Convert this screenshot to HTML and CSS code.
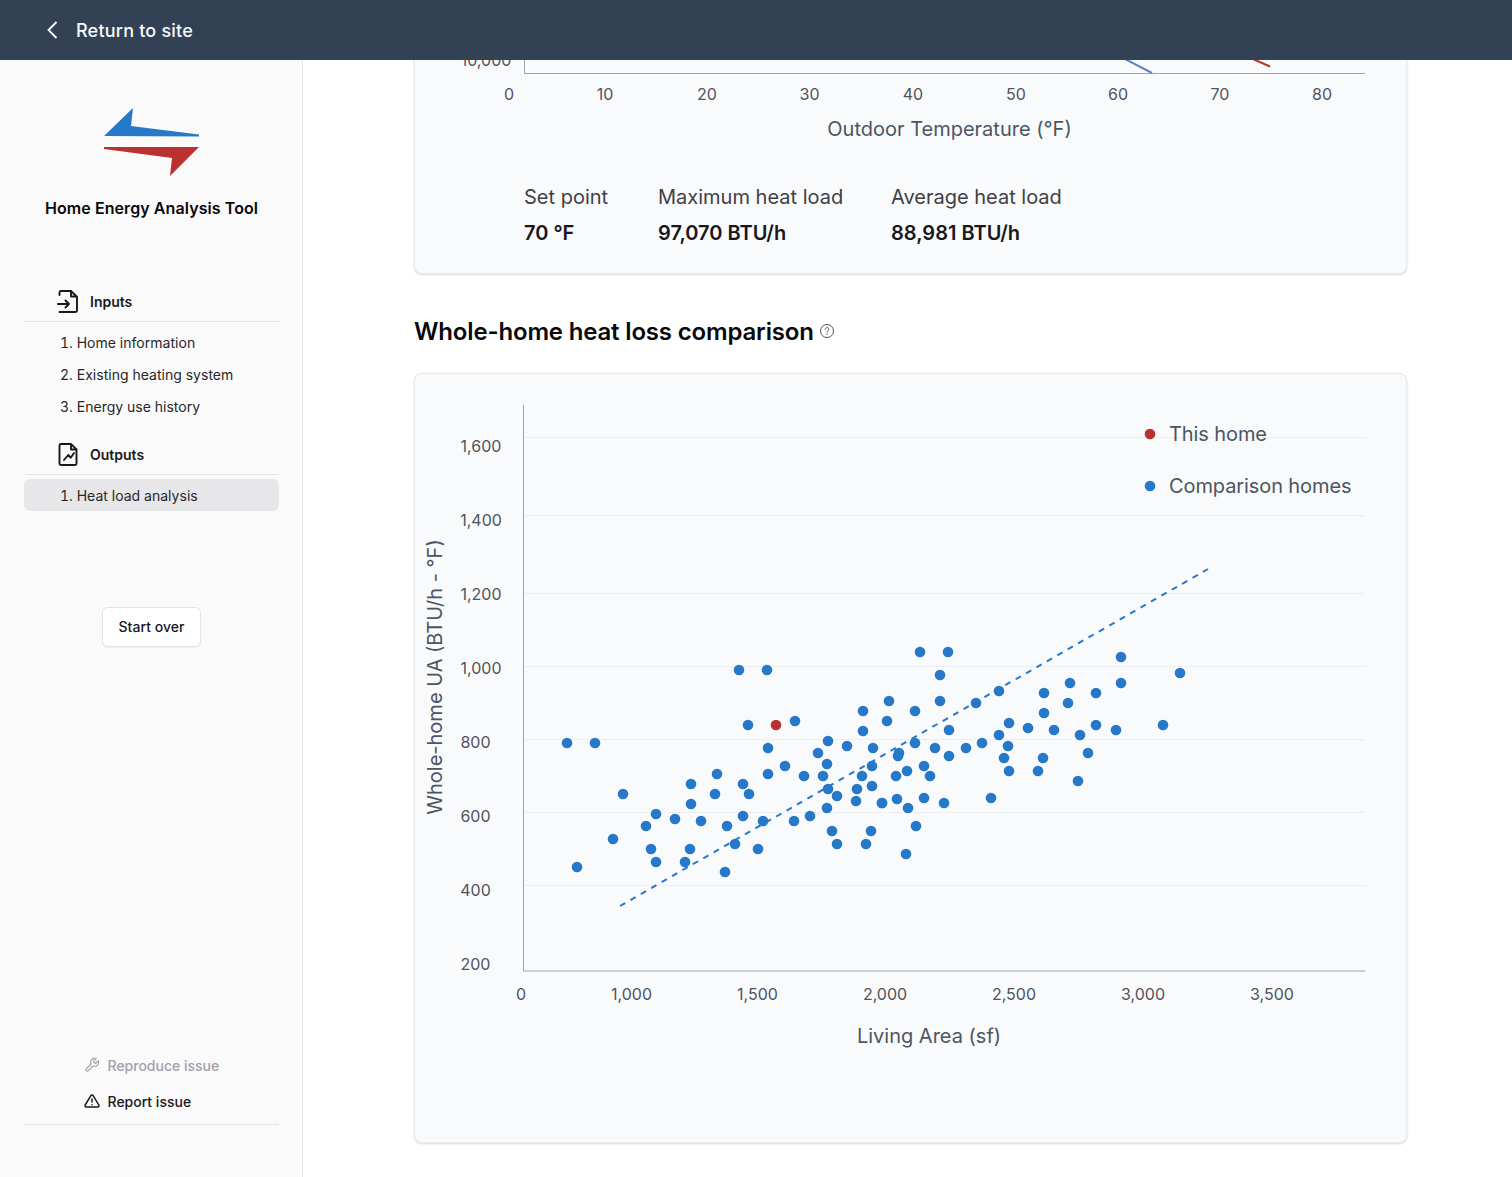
FILE: index.html
```html
<!DOCTYPE html>
<html lang="en">
<head>
<meta charset="utf-8">
<title>Home Energy Analysis Tool</title>
<link rel="stylesheet" href="styles.css">
</head>
<body>
<header class="topbar">
  <svg class="back-icon" width="12" height="20" viewBox="0 0 12 20"><path d="M10.500 2 L2.500 10 L10.500 18" fill="none" stroke="#fff" stroke-width="1.800"/></svg>
  <span class="back-label">Return to site</span>
</header>
<div class="shell">
  <aside class="sidebar">
    <div class="brand">
      <svg class="logo" width="96" height="70" viewBox="104 107 96 70">
        <path d="M104 136 L133 108 L131 126 L199 134.500 V136.500 Z" fill="#2679c9"/>
        <path d="M104 147 H199 L170 176 L172 158 L104 149 Z" fill="#b9322f"/>
      </svg>
      <div class="brand-name">Home Energy Analysis Tool</div>
    </div>
    <nav class="nav">
      <div class="nav-head">
        <svg width="22" height="24" viewBox="0 0 22 24" fill="none" stroke="#18181b" stroke-width="1.900" stroke-linecap="round" stroke-linejoin="round"><path d="M2.500 6V3.500A1.500 1.500 0 0 1 4 2H14L20 8V21.500A1.500 1.500 0 0 1 18.500 23H2.500"/><path d="M14 2.500V7.500H19.500"/><path d="M.8 15H12M8.500 11.500 12 15 8.500 18.500"/></svg>
        <span>Inputs</span>
      </div>
      <ul class="nav-list">
        <li class="nav-item">1. Home information</li>
        <li class="nav-item">2. Existing heating system</li>
        <li class="nav-item">3. Energy use history</li>
      </ul>
      <div class="nav-head nav-head-second">
        <svg width="22" height="24" viewBox="0 0 22 24" fill="none" stroke="#18181b" stroke-width="1.900" stroke-linecap="round" stroke-linejoin="round"><path d="M14 2H4A1.500 1.500 0 0 0 2.500 3.500V21.500A1.500 1.500 0 0 0 4 23H18A1.500 1.500 0 0 0 19.500 21.500V7.500Z"/><path d="M14 2.500V7.500H19"/><path d="M7 18 11.300 13 13.700 15.700 17 11"/></svg>
        <span>Outputs</span>
      </div>
      <ul class="nav-list">
        <li class="nav-item is-active">1. Heat load analysis</li>
      </ul>
    </nav>
    <button class="start-over" type="button">Start over</button>
    <div class="side-foot">
      <div class="foot-link is-disabled">
        <svg width="16" height="16" viewBox="0 0 24 24" fill="none" stroke="#a1a1aa" stroke-width="1.800" stroke-linecap="round" stroke-linejoin="round"><path d="M14.700 6.300a1 1 0 0 0 0 1.400l1.600 1.600a1 1 0 0 0 1.400 0l3.770-3.770a6 6 0 0 1-7.940 7.940l-6.910 6.910a2.120 2.120 0 0 1-3-3l6.910-6.910a6 6 0 0 1 7.940-7.940l-3.760 3.760z"/></svg>
        <span>Reproduce issue</span>
      </div>
      <div class="foot-link">
        <svg width="16" height="16" viewBox="0 0 24 24" fill="none" stroke="#18181b" stroke-width="2.200" stroke-linecap="round" stroke-linejoin="round"><path d="M10.300 3.900 1.800 18a2 2 0 0 0 1.700 3h17a2 2 0 0 0 1.700-3L13.700 3.900a2 2 0 0 0-3.400 0z"/><path d="M12 9v4.500M12 17.500h.01"/></svg>
        <span>Report issue</span>
      </div>
    </div>
  </aside>
  <main class="main">
    <section class="card card-top">
      <svg class="chart-top" viewBox="415 0 991 150" width="991" height="150">
        <text class="tick" x="486" y="65" text-anchor="middle">10,000</text>
        <path d="M524.500 40V72.500H1365" fill="none" stroke="#9ca3af"/>
        <path d="M1100 45 L1152 72" stroke="#5b84c4" stroke-width="2" fill="none"/>
        <path d="M1230 48 L1270 65.500" stroke="#b9322f" stroke-width="2" fill="none"/>
        <text class="tick" x="509" y="99" text-anchor="middle">0</text>
        <text class="tick" x="605" y="99" text-anchor="middle">10</text>
        <text class="tick" x="707" y="99" text-anchor="middle">20</text>
        <text class="tick" x="809.500" y="99" text-anchor="middle">30</text>
        <text class="tick" x="913" y="99" text-anchor="middle">40</text>
        <text class="tick" x="1016" y="99" text-anchor="middle">50</text>
        <text class="tick" x="1118" y="99" text-anchor="middle">60</text>
        <text class="tick" x="1220" y="99" text-anchor="middle">70</text>
        <text class="tick" x="1322" y="99" text-anchor="middle">80</text>
        <text class="axis-title" x="949.500" y="135" text-anchor="middle">Outdoor Temperature (°F)</text>
      </svg>
      <dl class="stats">
        <div class="stat"><dt>Set point</dt><dd>70 °F</dd></div>
        <div class="stat"><dt>Maximum heat load</dt><dd>97,070 BTU/h</dd></div>
        <div class="stat"><dt>Average heat load</dt><dd>88,981 BTU/h</dd></div>
      </dl>
    </section>
    <h2 class="section-title">
      <span>Whole-home heat loss comparison</span>
      <svg class="help-icon" width="16" height="16" viewBox="0 0 16 16" fill="none" stroke="#52525b" stroke-width="1"><circle cx="8" cy="8" r="6.500"/><path d="M6.200 6.300a1.800 1.800 0 1 1 2.800 1.500c-.6.400-1 .7-1 1.400M8 11v.6" stroke-linecap="round"/></svg>
    </h2>
    <section class="card card-chart">
      <svg class="chart-main" viewBox="415 374 991 768" width="991" height="768">
        <g class="grid">
          <path d="M524 437.500H1365M524 515.500H1365M524 593.500H1365M524 666.500H1365M524 739.500H1365M524 812.500H1365M524 885.500H1365"/>
        </g>
        <path d="M523.500 405V971H1365" fill="none" stroke="#9ca3af"/>
        <path class="trend" d="M620 906 L1208 569"/>
        <g id="points" class="points"><circle cx="739" cy="670" r="5.300"/><circle cx="767" cy="670" r="5.300"/><circle cx="748" cy="725" r="5.300"/><circle cx="795" cy="721" r="5.300"/><circle cx="567" cy="743" r="5.300"/><circle cx="595" cy="743" r="5.300"/><circle cx="768" cy="748" r="5.300"/><circle cx="828" cy="741" r="5.300"/><circle cx="847" cy="746" r="5.300"/><circle cx="818" cy="753" r="5.300"/><circle cx="827" cy="764" r="5.300"/><circle cx="873" cy="748" r="5.300"/><circle cx="863" cy="711" r="5.300"/><circle cx="863" cy="731" r="5.300"/><circle cx="785" cy="766" r="5.300"/><circle cx="768" cy="774" r="5.300"/><circle cx="717" cy="774" r="5.300"/><circle cx="823" cy="776" r="5.300"/><circle cx="804" cy="776" r="5.300"/><circle cx="691" cy="784" r="5.300"/><circle cx="743" cy="784" r="5.300"/><circle cx="623" cy="794" r="5.300"/><circle cx="715" cy="794" r="5.300"/><circle cx="749" cy="794" r="5.300"/><circle cx="828" cy="789" r="5.300"/><circle cx="837" cy="796" r="5.300"/><circle cx="857" cy="789" r="5.300"/><circle cx="872" cy="766" r="5.300"/><circle cx="862" cy="776" r="5.300"/><circle cx="872" cy="786" r="5.300"/><circle cx="856" cy="801" r="5.300"/><circle cx="691" cy="804" r="5.300"/><circle cx="827" cy="808" r="5.300"/><circle cx="882" cy="803" r="5.300"/><circle cx="656" cy="814" r="5.300"/><circle cx="743" cy="816" r="5.300"/><circle cx="810" cy="816" r="5.300"/><circle cx="675" cy="819" r="5.300"/><circle cx="646" cy="826" r="5.300"/><circle cx="701" cy="821" r="5.300"/><circle cx="727" cy="826" r="5.300"/><circle cx="763" cy="821" r="5.300"/><circle cx="794" cy="821" r="5.300"/><circle cx="832" cy="831" r="5.300"/><circle cx="871" cy="831" r="5.300"/><circle cx="613" cy="839" r="5.300"/><circle cx="735" cy="844" r="5.300"/><circle cx="837" cy="844" r="5.300"/><circle cx="866" cy="844" r="5.300"/><circle cx="651" cy="849" r="5.300"/><circle cx="690" cy="849" r="5.300"/><circle cx="758" cy="849" r="5.300"/><circle cx="577" cy="867" r="5.300"/><circle cx="656" cy="862" r="5.300"/><circle cx="685" cy="862" r="5.300"/><circle cx="725" cy="872" r="5.300"/><circle cx="920" cy="652" r="5.300"/><circle cx="948" cy="652" r="5.300"/><circle cx="1121" cy="657" r="5.300"/><circle cx="1180" cy="673" r="5.300"/><circle cx="940" cy="675" r="5.300"/><circle cx="1121" cy="683" r="5.300"/><circle cx="1070" cy="683" r="5.300"/><circle cx="1044" cy="693" r="5.300"/><circle cx="1096" cy="693" r="5.300"/><circle cx="999" cy="691" r="5.300"/><circle cx="940" cy="701" r="5.300"/><circle cx="976" cy="703" r="5.300"/><circle cx="1068" cy="703" r="5.300"/><circle cx="889" cy="701" r="5.300"/><circle cx="915" cy="711" r="5.300"/><circle cx="1044" cy="713" r="5.300"/><circle cx="887" cy="721" r="5.300"/><circle cx="1009" cy="723" r="5.300"/><circle cx="1163" cy="725" r="5.300"/><circle cx="1096" cy="725" r="5.300"/><circle cx="1028" cy="728" r="5.300"/><circle cx="1054" cy="730" r="5.300"/><circle cx="1116" cy="730" r="5.300"/><circle cx="949" cy="730" r="5.300"/><circle cx="1080" cy="735" r="5.300"/><circle cx="999" cy="735" r="5.300"/><circle cx="915" cy="743" r="5.300"/><circle cx="982" cy="743" r="5.300"/><circle cx="1008" cy="746" r="5.300"/><circle cx="935" cy="748" r="5.300"/><circle cx="966" cy="748" r="5.300"/><circle cx="899" cy="753" r="5.300"/><circle cx="898" cy="756" r="5.300"/><circle cx="1088" cy="753" r="5.300"/><circle cx="949" cy="756" r="5.300"/><circle cx="1004" cy="758" r="5.300"/><circle cx="1043" cy="758" r="5.300"/><circle cx="924" cy="766" r="5.300"/><circle cx="907" cy="771" r="5.300"/><circle cx="1009" cy="771" r="5.300"/><circle cx="1038" cy="771" r="5.300"/><circle cx="896" cy="776" r="5.300"/><circle cx="930" cy="776" r="5.300"/><circle cx="1078" cy="781" r="5.300"/><circle cx="924" cy="798" r="5.300"/><circle cx="991" cy="798" r="5.300"/><circle cx="897" cy="799" r="5.300"/><circle cx="882" cy="803" r="5.300"/><circle cx="944" cy="803" r="5.300"/><circle cx="908" cy="808" r="5.300"/><circle cx="916" cy="826" r="5.300"/><circle cx="906" cy="854" r="5.300"/></g>
        <circle class="home-point" cx="776" cy="725" r="5.300"/>
        <g class="tick">
          <text x="481" y="451.500" text-anchor="middle">1,600</text>
          <text x="481" y="525.500" text-anchor="middle">1,400</text>
          <text x="481" y="599.500" text-anchor="middle">1,200</text>
          <text x="481" y="673.500" text-anchor="middle">1,000</text>
          <text x="475.500" y="747.500" text-anchor="middle">800</text>
          <text x="475.500" y="821.500" text-anchor="middle">600</text>
          <text x="475.500" y="895.500" text-anchor="middle">400</text>
          <text x="475.500" y="969.500" text-anchor="middle">200</text>
          <text x="521" y="999.500" text-anchor="middle">0</text>
          <text x="631.500" y="999.500" text-anchor="middle">1,000</text>
          <text x="757.500" y="999.500" text-anchor="middle">1,500</text>
          <text x="885" y="999.500" text-anchor="middle">2,000</text>
          <text x="1014" y="999.500" text-anchor="middle">2,500</text>
          <text x="1143" y="999.500" text-anchor="middle">3,000</text>
          <text x="1272" y="999.500" text-anchor="middle">3,500</text>
        </g>
        <text class="axis-title" x="929" y="1043" text-anchor="middle">Living Area (sf)</text>
        <text class="axis-title" transform="translate(442 677) rotate(-90)" text-anchor="middle">Whole-home UA (BTU/h - °F)</text>
        <circle class="home-point" cx="1150" cy="434" r="5.300"/>
        <text class="axis-title legend-label" x="1169" y="441">This home</text>
        <circle class="legend-comp" cx="1150" cy="486" r="5.300"/>
        <text class="axis-title legend-label" x="1169" y="493">Comparison homes</text>
      </svg>
    </section>
  </main>
</div>
</body>
</html>
```
FILE: styles.css
```css
* { box-sizing: border-box; }
html, body { margin: 0; height: 100%; }
body {
  font-family: Inter, "Liberation Sans", sans-serif;
  color: #09090b;
  background: #fff;
  overflow: hidden;
}
.topbar {
  height: 60px;
  background: #334155;
  display: flex;
  align-items: center;
  padding-left: 46px;
  gap: 18px;
  position: relative;
  z-index: 2;
}
.back-label { color: #f8fafc; font-size: 18px; font-weight: 500; letter-spacing: .2px; }
.shell { display: flex; height: 1117px; }
.sidebar {
  width: 303px;
  flex: none;
  background: #fafafa;
  border-right: 1px solid #e4e4e7;
  padding: 0 23px 0 24px;
  display: flex;
  flex-direction: column;
}
.brand {
  display: flex;
  flex-direction: column;
  align-items: center;
  padding-top: 47px;
}
.logo { display: block; }
.brand-name { margin-top: 21px; font-size: 16px; font-weight: 600; line-height: 20px; letter-spacing: .08px; }
.nav { margin-top: 61px; }
.nav-head {
  display: flex;
  align-items: center;
  gap: 11px;
  height: 43px;
  padding: 2px 0 0 33px;
  border-bottom: 1px solid #e4e4e7;
  font-size: 14px;
  font-weight: 600;
  color: #18181b;
}
.nav-head-second { margin-top: 10px; }
.nav-list { list-style: none; margin: 4px 0 0; padding: 0; }
.nav-item {
  height: 32px;
  line-height: 33px;
  padding-left: 36px;
  font-size: 14px;
  font-feature-settings: "tnum";
  letter-spacing: .03px;
  color: #27272a;
  border-radius: 6px;
}
.is-active { background: #e4e4e7e0; }
.start-over {
  align-self: center;
  margin-top: 96px;
  height: 40px;
  width: 99px;
  background: #fff;
  border: 1px solid #e4e4e7;
  border-radius: 6px;
  box-shadow: 0 1px 2px rgba(0,0,0,.06);
  font: 500 14px Inter, "Liberation Sans", sans-serif;
  letter-spacing: .05px;
  color: #18181b;
  padding: 0 0 1px;
}
.side-foot {
  margin-top: auto;
  margin-bottom: 52px;
  padding: 0 0 13px 60px;
  border-bottom: 1px solid #e4e4e7;
  display: flex;
  flex-direction: column;
  gap: 16px;
}
.foot-link {
  display: flex;
  align-items: center;
  gap: 7.500px;
  height: 20px;
  font-size: 14px;
  font-weight: 500;
  color: #18181b;
}
.foot-link.is-disabled { color: #a1a1aa; }
.main {
  flex: 1;
  min-width: 0;
  padding-left: 111px;
  overflow: hidden;
}
.card {
  width: 993px;
  background: #f9fafb;
  border: 1px solid #e9eaee;
  border-radius: 8px;
  box-shadow: 0 1px 3px rgba(0,0,0,.1), 0 1px 2px rgba(0,0,0,.06);
}
.card-top { height: 274px; margin-top: -60px; }
.chart-top, .chart-main { display: block; }
.tick { font-size: 16px; fill: #52525b; }
.axis-title { font-size: 20px; fill: #4b5563; }
.legend-label { letter-spacing: -.1px; }
.grid path { stroke: #eceef1; fill: none; }
.trend { stroke: #2679c9; stroke-width: 2; stroke-dasharray: 6 6; fill: none; }
.points circle, .legend-comp { fill: #2679c9; }
.home-point { fill: #b9322f; }
.stats {
  display: grid;
  grid-template-columns: 134px 233px auto;
  margin: 32px 0 0 109px;
}
.stat dt { font-size: 20px; color: #3f3f46; line-height: 28px; }
.stat dd { margin: 8px 0 0; font-size: 20px; font-weight: 600; color: #18181b; line-height: 28px; }
.section-title {
  margin: 42px 0 25px;
  height: 32px;
  display: flex;
  align-items: center;
  gap: 5px;
  font-size: 24px;
  font-weight: 600;
  line-height: 32px;
  letter-spacing: -.17px;
  color: #09090b;
}
.help-icon { margin-bottom: 2px; }
```
